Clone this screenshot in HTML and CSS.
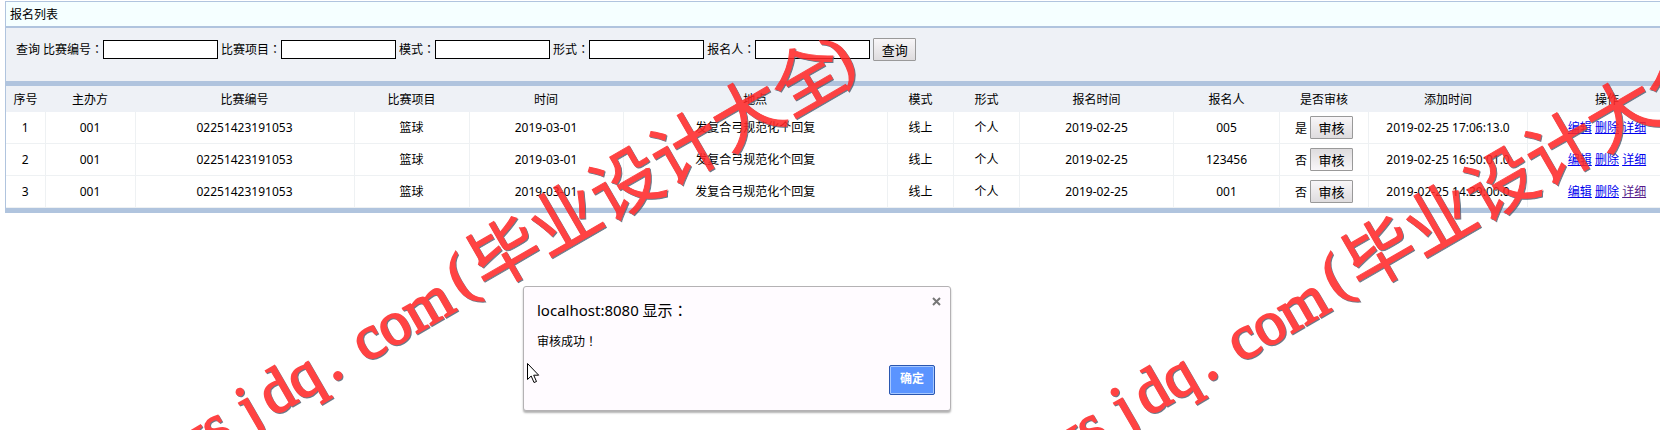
FILE: index.html
```html
<!DOCTYPE html>
<html lang="zh-CN">
	<head>
		<meta charset="UTF-8" />
		<meta name="viewport" content="width=device-width, initial-scale=1.0" />
		<title>报名列表</title>
		<link rel="stylesheet" href="styles.css">
	</head>
	<body>
		<div class="panel">
			<div class="panel-title">报名列表</div>

			<!-- Search form -->
			<form class="search">
				<span>查询</span>
				<div class="field">
					<label for="bianhao">比赛编号<span lang="zh-TW" class="colon">：</span></label>
					<input type="text" id="bianhao" />
				</div>
				<div class="field">
					<label for="xiangmu">比赛项目<span lang="zh-TW" class="colon">：</span></label>
					<input type="text" id="xiangmu" />
				</div>
				<div class="field">
					<label for="moshi">模式<span lang="zh-TW" class="colon">：</span></label>
					<input type="text" id="moshi" />
				</div>
				<div class="field">
					<label for="xingshi">形式<span lang="zh-TW" class="colon">：</span></label>
					<input type="text" id="xingshi" />
				</div>
				<div class="field">
					<label for="baomingren">报名人<span lang="zh-TW" class="colon">：</span></label>
					<input type="text" id="baomingren" />
				</div>
				<button type="button" class="btn">查询</button>
			</form>

			<!-- List -->
			<table class="list">
				<colgroup>
					<col class="c-no" />
					<col class="c-host" />
					<col class="c-code" />
					<col class="c-item" />
					<col class="c-date" />
					<col class="c-place" />
					<col class="c-mode" />
					<col class="c-mode" />
					<col class="c-date" />
					<col class="c-user" />
					<col class="c-check" />
					<col class="c-added" />
					<col class="c-added" />
				</colgroup>
				<thead>
					<tr>
						<th>序号</th>
						<th>主办方</th>
						<th>比赛编号</th>
						<th>比赛项目</th>
						<th>时间</th>
						<th>地点</th>
						<th>模式</th>
						<th>形式</th>
						<th>报名时间</th>
						<th>报名人</th>
						<th>是否审核</th>
						<th>添加时间</th>
						<th>操作</th>
					</tr>
				</thead>
				<tbody>
					<tr>
						<td>1</td>
						<td>001</td>
						<td>02251423191053</td>
						<td>篮球</td>
						<td>2019-03-01</td>
						<td>发复合弓规范化个回复</td>
						<td>线上</td>
						<td>个人</td>
						<td>2019-02-25</td>
						<td>005</td>
						<td>是 <button type="button" class="btn">审核</button></td>
						<td>2019-02-25 17:06:13.0</td>
						<td><a href="#edit1">编辑</a> <a href="#del1">删除</a> <a href="#detail1">详细</a></td>
					</tr>
					<tr>
						<td>2</td>
						<td>001</td>
						<td>02251423191053</td>
						<td>篮球</td>
						<td>2019-03-01</td>
						<td>发复合弓规范化个回复</td>
						<td>线上</td>
						<td>个人</td>
						<td>2019-02-25</td>
						<td>123456</td>
						<td>否 <button type="button" class="btn active">审核</button></td>
						<td>2019-02-25 16:50:01.0</td>
						<td><a href="#edit2">编辑</a> <a href="#del2">删除</a> <a href="#detail2">详细</a></td>
					</tr>
					<tr>
						<td>3</td>
						<td>001</td>
						<td>02251423191053</td>
						<td>篮球</td>
						<td>2019-03-01</td>
						<td>发复合弓规范化个回复</td>
						<td>线上</td>
						<td>个人</td>
						<td>2019-02-25</td>
						<td>001</td>
						<td>否 <button type="button" class="btn">审核</button></td>
						<td>2019-02-25 14:29:00.0</td>
						<td><a href="#edit3">编辑</a> <a href="#del3">删除</a> <a href="#detail3" class="seen">详细</a></td>
					</tr>
				</tbody>
			</table>
		</div>

		<!-- Watermark -->
		<svg class="watermark" aria-hidden="true">
			<defs>
				<g id="mark">
					<g class="mark-latin">
						<text x="-380" y="26">ys</text>
						<text x="-307" y="26">j</text>
						<text x="-282" y="26">dq</text>
						<text x="-213" y="26">.</text>
						<text x="-175" y="26">com</text>
						<text x="-60" y="18">(</text>
						<text x="378" y="18">)</text>
					</g>
					<text class="mark-cn" x="-35" y="26">毕业设计大全</text>
				</g>
			</defs>
			<use href="#mark" transform="translate(504 253) rotate(-30)" />
			<use href="#mark" transform="translate(1379 253) rotate(-30)" />
		</svg>

		<!-- Alert -->
		<div class="alert" role="alertdialog" aria-labelledby="alertTitle">
			<div class="alert-head">
				<div id="alertTitle" class="alert-title">localhost:8080 显示<span lang="zh-TW" class="colon">：</span></div>
				<button type="button" class="alert-close" aria-label="关闭">
					<svg width="9" height="9" viewBox="0 0 9 9"><path d="M1 1l7 7M8 1l-7 7" /></svg>
				</button>
			</div>
			<div class="alert-text">审核成功<span lang="zh-TW" class="colon">！</span></div>
			<button type="button" class="alert-ok">确定</button>
		</div>

		<svg class="cursor" width="13" height="21" viewBox="0 0 13 21">
			<path d="M.5 .5v16l3.700-3.500 2.800 6.500 2.500-1-2.800-6.300h5z" />
		</svg>
	</body>
</html>
```

FILE: styles.css
```css
body {
	margin: 0;
	min-height: 100vh;
	position: relative;
	overflow: hidden;
	background: #fff;
	color: #000;
	font-family: "Noto Sans", "Noto Sans CJK SC", sans-serif;
	font-size: 12px;
	line-height: 16px;
}

/* the list is wider than the window and runs off to the right */
.panel {
	margin: 1px -28px 0 5px;
	border: 1px solid #b0c4de;
	border-bottom: 5px solid #b0c4de;
}

.panel-title {
	padding: 5px 4px 3px;
	background: #f5ffff;
	border-bottom: 2px solid #b0c4de;
}

.colon {
	font-family: "Noto Sans CJK TC", sans-serif;
}

.search {
	display: flex;
	align-items: center;
	gap: 3px;
	padding: 10px 10px 20px;
	background: #eef1f6;
	border-bottom: 5px solid #b0c4de;
}

.field {
	display: flex;
	align-items: center;
}

.search input {
	box-sizing: border-box;
	width: 115px;
	height: 19px;
	padding: 1px;
	border: 1px solid #000;
	background: #fff;
	font-size: 12px;
}

.btn {
	box-sizing: border-box;
	width: 43px;
	height: 23px;
	padding: 0;
	border: 1px solid #999;
	border-radius: 1px;
	background: linear-gradient(#f8f6f8, #dedcde);
	color: #000;
	font-family: inherit;
	font-size: 13px;
	line-height: 20px;
}

.btn.active {
	background: linear-gradient(#dedcde, #f8f6f8);
}

.list {
	width: 100%;
	table-layout: fixed;
	border-collapse: collapse;
	text-align: center;
}

.list th {
	height: 24px;
	padding: 2px 0 0;
	background: #eef1f6;
	font-weight: normal;
}

.list td {
	height: 31px;
	padding: 0;
	border-right: 1px solid #eef1f3;
	border-bottom: 1px solid #eef1f3;
	white-space: nowrap;
}

.list a {
	color: #00e;
}

.list a.seen {
	color: #551a8b;
}

.c-no { width: 39px; }
.c-host { width: 90px; }
.c-code { width: 219px; }
.c-item { width: 115px; }
.c-date { width: 154px; }
.c-place { width: auto; }
.c-mode { width: 66px; }
.c-user { width: 106px; }
.c-check { width: 89px; }
.c-added { width: 159px; }

.watermark {
	position: absolute;
	top: 0;
	left: 0;
	width: 100%;
	height: 100%;
	fill: #ff2828;
	opacity: 0.87;
	pointer-events: none;
	filter: drop-shadow(1px 1px 0 #567);
}

.mark-latin {
	font-family: "Liberation Serif", serif;
	font-size: 62px;
	stroke: #ff2828;
	stroke-width: 2px;
}

.mark-cn {
	font-family: "Noto Sans CJK SC", sans-serif;
	font-size: 70px;
	stroke: #ff2828;
	stroke-width: 1px;
}

.alert {
	position: absolute;
	top: 286px;
	left: 523px;
	box-sizing: border-box;
	width: 428px;
	padding: 12px 15px 15px 13px;
	display: flex;
	flex-direction: column;
	border: 1px solid #b4b2b4;
	border-radius: 3px;
	background: #fffbff;
	box-shadow: 0 2px 2px rgba(0, 0, 0, 0.3);
}

.alert-head {
	display: flex;
	justify-content: space-between;
	align-items: flex-start;
}

.alert-title {
	font-size: 15px;
	line-height: 22px;
}

.alert-close {
	display: flex;
	margin: -2px -6px 0 0;
	padding: 0;
	border: 0;
	background: none;
}

.alert-close path {
	stroke: #777;
	stroke-width: 2px;
}

.alert-text {
	margin-top: 12px;
}

.alert-ok {
	align-self: flex-end;
	margin-top: 15px;
	width: 46px;
	height: 30px;
	padding: 0 0 4px;
	border: 1px solid #2a56b0;
	border-radius: 2px;
	background: #5b94ff;
	box-shadow: inset 0 0 0 1px #a8c8ff;
	color: #fff;
	font-family: inherit;
	font-size: 12px;
	font-weight: bold;
}

.cursor {
	position: absolute;
	top: 363px;
	left: 527px;
	fill: #fff;
	stroke: #000;
}
```
